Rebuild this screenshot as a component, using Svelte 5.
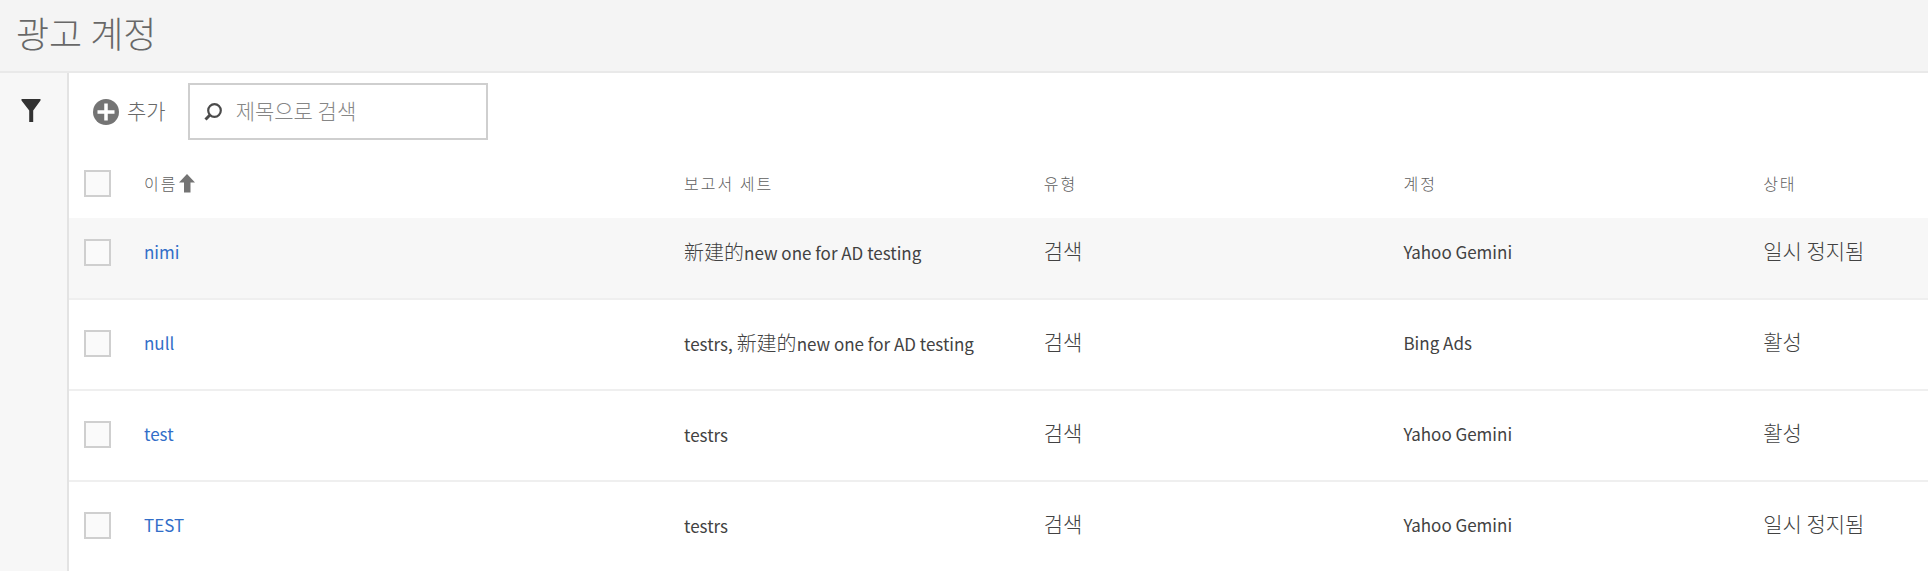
<script>
  const columns = ['보고서 세트', '유형', '계정', '상태'];
  const rows = [
    { name: 'nimi', suite: ['', '新建的', 'new one for AD testing'], type: '검색', account: 'Yahoo Gemini', status: '일시 정지됨' },
    { name: 'null', suite: ['testrs, ', '新建的', 'new one for AD testing'], type: '검색', account: 'Bing Ads', status: '활성' },
    { name: 'test', suite: ['testrs', '', ''], type: '검색', account: 'Yahoo Gemini', status: '활성' },
    { name: 'TEST', suite: ['testrs', '', ''], type: '검색', account: 'Yahoo Gemini', status: '일시 정지됨' }
  ];
</script>

<div class="page">
  <header><h1>광고 계정</h1></header>
  <div class="body">
    <aside>
      <button class="filter" aria-label="필터">
        <svg width="20" height="24" viewBox="0 0 20 24"><path d="M.5 0h19v1.500L12.200 11.500v11.500H8.200v-11.500L.5 1.500z" fill="#323232" /></svg>
      </button>
    </aside>
    <main>
      <div class="toolbar">
        <button class="add">
          <svg width="26" height="26" viewBox="0 0 26 26"><circle cx="13" cy="13" r="13" fill="#747474" /><path d="M13 4.500v17M4.500 13h17" stroke="#fff" stroke-width="3.500" /></svg>
          <span>추가</span>
        </button>
        <label class="search">
          <svg width="18" height="18" viewBox="0 0 18 18" fill="none" stroke="#4b4b4b"><circle cx="10.500" cy="7.500" r="6.300" stroke-width="2.200" /><path d="M6.200 11.800L1.500 16.500" stroke-width="3" /></svg>
          <input type="text" placeholder="제목으로 검색" aria-label="제목으로 검색" />
        </label>
      </div>
      <table>
        <colgroup>
          <col class="c-check" /><col class="c-name" /><col class="c-data" /><col class="c-data" /><col class="c-data" /><col />
        </colgroup>
        <thead>
          <tr>
            <th><input type="checkbox" aria-label="모두 선택" /></th>
            <th>
              <button class="sort">이름<svg width="16" height="19" viewBox="0 0 16 19"><path d="M8 0l8 8.500h-4.500V18.500h-6.500V8.500H0z" fill="#747474" /></svg></button>
            </th>
            {#each columns as c}<th>{c}</th>{/each}
          </tr>
        </thead>
        <tbody>
          {#each rows as r}
            <tr>
              <td><input type="checkbox" aria-label={r.name} /></td>
              <td class="latin"><a href="#{r.name}">{r.name}</a></td>
              <td class="latin">{r.suite[0]}<span class="han">{r.suite[1]}</span>{r.suite[2]}</td>
              <td>{r.type}</td>
              <td class="latin">{r.account}</td>
              <td>{r.status}</td>
            </tr>
          {/each}
        </tbody>
      </table>
    </main>
  </div>
</div>

<style>
  :global(body) { margin: 0; background: #fff; }
  .page {
    font-family: "Noto Sans CJK KR", sans-serif;
    font-size: 21px;
    font-weight: 300;
    line-height: 24px;
    color: #424242;
    height: 100vh;
    overflow: hidden;
    display: flex;
    flex-direction: column;
  }
  header { background: #f4f4f4; border-bottom: 2px solid #e9e9e9; padding: 10px 16px 17px; }
  h1 { margin: 0; font-size: 36px; font-weight: 300; line-height: 44px; color: #686868; }
  button { font: inherit; color: inherit; letter-spacing: inherit; border: 0; background: none; padding: 0; display: flex; align-items: center; cursor: pointer; }
  svg { display: block; flex: none; }
  .body { display: flex; flex: 1; min-height: 0; }
  aside { flex: none; width: 67px; background: #f7f7f7; border-right: 2px solid #e3e3e3; }
  .filter { margin: 26px 0 0 21px; }
  main { flex: 1; min-width: 0; }
  .toolbar { display: flex; align-items: center; gap: 22px; padding: 10px 24px 0; color: #686868; }
  .add { gap: 8px; }
  .add span { padding-bottom: 4px; }
  .search { display: flex; align-items: center; gap: 14px; box-sizing: border-box; width: 300px; height: 57px; border: 2px solid #cfcfcf; padding: 0 14px; }
  .search input { font: inherit; color: #4b4b4b; border: 0; outline: 0; padding: 0 0 4px; min-width: 0; flex: 1; height: 40px; background: none; }
  .search input::placeholder { color: #868686; opacity: 1; }
  table { width: 100%; table-layout: fixed; border-collapse: separate; border-spacing: 0; }
  .c-check { width: 75px; }
  .c-name { width: 29.05%; }
  .c-data { width: 19.35%; }
  th, td { box-sizing: border-box; padding: 0; text-align: left; vertical-align: top; font-weight: 300; white-space: nowrap; }
  th { height: 78px; padding-top: 31px; font-size: 16px; letter-spacing: 2px; color: #606060; }
  .sort { gap: 2px; }
  td { height: 91px; padding-top: 29px; border-bottom: 2px solid #efefef; }
  th:first-child, td:first-child { padding: 30px 0 0 15px; }
  td.latin { padding-top: 31px; font-weight: 400; font-size: 17px; }
  tbody tr:first-child td { height: 82px; padding-top: 20px; background: #f7f7f7; }
  tbody tr:first-child td:first-child { padding-top: 21px; }
  tbody tr:first-child td.latin { padding-top: 22px; }
  .han { font-family: "Noto Sans CJK SC", sans-serif; font-size: 20px; font-weight: 300; }
  a { color: #326ec8; text-decoration: none; }
  input[type="checkbox"] { appearance: none; display: block; box-sizing: border-box; width: 27px; height: 27px; margin: 0; border: 2px solid #cfcfcf; background: #fafafa; }
</style>
